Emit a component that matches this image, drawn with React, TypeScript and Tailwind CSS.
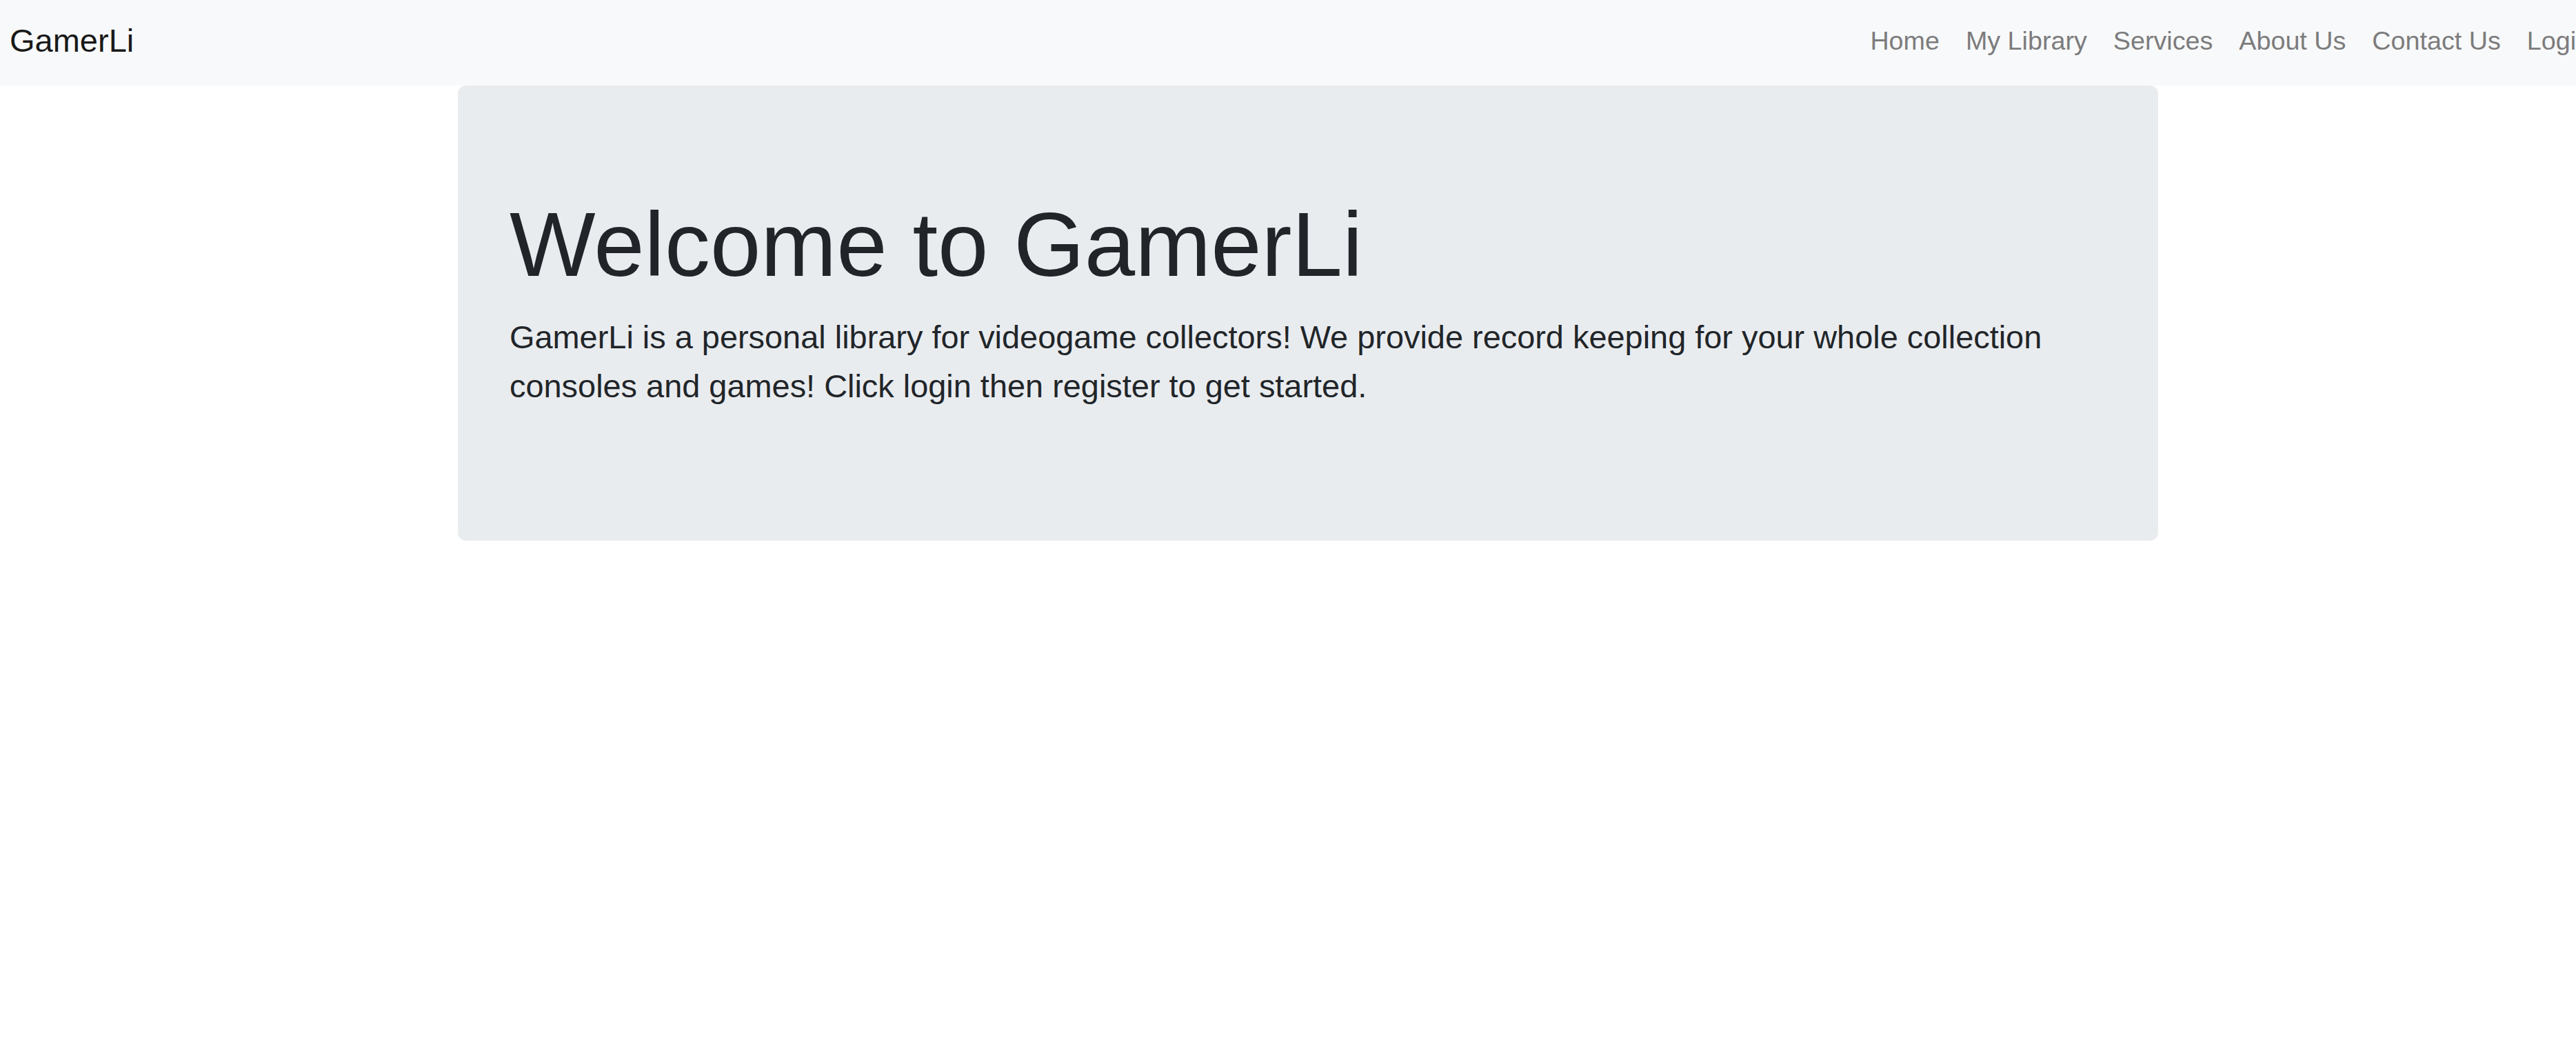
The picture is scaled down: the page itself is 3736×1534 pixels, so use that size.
import React from "react";

const links = ["Home", "My Library", "Services", "About Us", "Contact Us", "Login"];

export default function App() {
  return (
    <div
      className="min-h-screen w-full overflow-hidden bg-white"
      style={{ fontFamily: '"Liberation Sans", Arial, Helvetica, sans-serif' }}
    >
      <nav className="flex h-[124px] w-[3813px] items-center bg-[#f8f9fa] pb-[6px] pl-[14px] pr-[37px]">
        <a className="text-[47px] leading-[70px] text-[#191919]">GamerLi</a>
        <ul className="ml-auto flex items-center">
          {links.map((l) => (
            <li key={l}>
              <a className="block px-[19px] text-[37.7px] leading-[56px] text-[#7c7c7d]">{l}</a>
            </li>
          ))}
        </ul>
      </nav>
      <div className="w-[3794px]">
        <div className="mx-auto w-[2466px] rounded-[12px] bg-[#e9ecef] px-[75px] pb-[151px] pt-[152px] text-[#212529]">
          <h1 className="mb-[20px] text-[132px] font-light leading-[1.2]">Welcome to GamerLi</h1>
          <p className="mb-[37px] text-[46.9px] leading-[71px]">
            GamerLi is a personal library for videogame collectors! We provide record keeping for your whole
            collection consoles and games! Click login then register to get started.
          </p>
        </div>
      </div>
    </div>
  );
}
